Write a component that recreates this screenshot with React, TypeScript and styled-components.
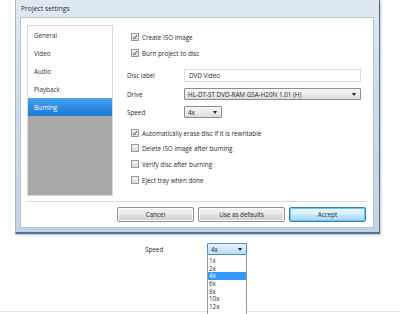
import styled, { createGlobalStyle } from "styled-components";

const GlobalStyle = createGlobalStyle`
  html, body {
    margin: 0;
    padding: 0;
    background: #ffffff;
  }
  body {
    width: 400px;
    height: 314px;
    overflow: hidden;
    font-family: "Open Sans", "DejaVu Sans", sans-serif;
    font-size: 6.3px;
    color: #2a2a2a;
  }
`;

const Page = styled.div`
  display: flex;
  flex-direction: column;
  width: 400px;
  height: 314px;
`;

const Window = styled.div`
  margin-left: 15px;
  width: 365px;
  height: 234px;
  box-sizing: border-box;
  display: flex;
  flex-direction: column;
  background: linear-gradient(180deg, #dfe9f3 0%, #cfdcea 40%, #c3d3e4 100%);
  border-right: 1px solid #4e6e8a;
  border-bottom: 2px solid #4f7390;
  border-left: 1px solid #a9bccf;
  box-shadow: 1px 1px 2px rgba(60, 80, 100, 0.35);
`;

const TitleBar = styled.div`
  height: 17px;
  display: flex;
  align-items: center;
  padding-left: 5px;
  font-size: 6.8px;
  color: #1e1e1e;
  text-shadow: 0 0 3px #ffffff;
`;

const Client = styled.div`
  flex: 1;
  margin: 0 5px 4px 4px;
  background: #ffffff;
  border: 1px solid #b5c4d3;
  padding: 7px 5px 0 6px;
  box-sizing: border-box;
  display: flex;
  flex-direction: column;
`;

const MainRow = styled.div`
  display: flex;
  height: 171px;
`;

const Nav = styled.ul`
  list-style: none;
  margin: 0;
  padding: 0;
  width: 86px;
  display: flex;
  flex-direction: column;
  background: #a9a9a9;
  border: 1px solid #d8d8d8;
  box-sizing: border-box;
`;

const NavItem = styled.li<{ $active?: boolean }>`
  height: 18px;
  display: flex;
  align-items: center;
  padding-left: 6px;
  color: ${(p) => (p.$active ? "#ffffff" : "#333333")};
  background: ${(p) =>
    p.$active
      ? "linear-gradient(180deg, #4aa6f0 0%, #2f8be0 50%, #1f7ad4 100%)"
      : "#ffffff"};
`;

const Content = styled.div`
  flex: 1;
  margin-left: 14px;
  display: flex;
  flex-direction: column;
`;

const CheckRow = styled.label<{ $top: number }>`
  display: flex;
  align-items: center;
  height: 10px;
  margin-top: ${(p) => p.$top}px;
  padding-left: 4px;
  gap: 3px;
`;

const Box = styled.span`
  width: 6px;
  height: 6px;
  border: 1px solid #9a9a9a;
  background: linear-gradient(180deg, #f3f3f3, #dcdcdc);
  display: flex;
  align-items: center;
  justify-content: center;
  flex-shrink: 0;
`;

const FieldRow = styled.div<{ $top: number }>`
  display: flex;
  align-items: center;
  margin-top: ${(p) => p.$top}px;
`;

const FieldLabel = styled.span`
  width: 57px;
  flex-shrink: 0;
`;

const TextField = styled.div`
  width: 177px;
  height: 13px;
  box-sizing: border-box;
  border: 1px solid #d6dce4;
  display: flex;
  align-items: center;
  padding-left: 4px;
`;

const Select = styled.div<{ $w: number; $focus?: boolean }>`
  width: ${(p) => p.$w}px;
  height: 12px;
  box-sizing: border-box;
  border: 1px solid ${(p) => (p.$focus ? "#4f8fc0" : "#8c8c8c")};
  border-radius: 1px;
  background: ${(p) =>
    p.$focus
      ? "linear-gradient(180deg, #eaf5fd 0%, #cfe7f8 50%, #b9dcf4 100%)"
      : "linear-gradient(180deg, #f7f7f7 0%, #ebebeb 50%, #dcdcdc 100%)"};
  display: flex;
  align-items: center;
  justify-content: space-between;
  padding: 0 4px 0 3px;
`;

const Arrow = styled.span`
  width: 0;
  height: 0;
  border-left: 2px solid transparent;
  border-right: 2px solid transparent;
  border-top: 3px solid #222;
`;

const Separator = styled.div`
  margin-top: 5px;
  height: 1px;
  width: 341px;
  background: #d9d9d9;
`;

const ButtonRow = styled.div`
  display: flex;
  justify-content: flex-end;
  gap: 4px;
  margin-top: 5px;
  padding-right: 2px;
`;

const Button = styled.div<{ $w: number; $primary?: boolean }>`
  width: ${(p) => p.$w}px;
  height: 15px;
  box-sizing: border-box;
  border: 1px solid ${(p) => (p.$primary ? "#3c7fb1" : "#8e8f8f")};
  border-radius: 2px;
  display: flex;
  align-items: center;
  justify-content: center;
  background: ${(p) =>
    p.$primary
      ? "linear-gradient(180deg, #eaf6fd 0%, #d9f0fc 45%, #bee6fd 55%, #a7d9f5 100%)"
      : "linear-gradient(180deg, #f2f2f2 0%, #ebebeb 45%, #dddddd 55%, #cfcfcf 100%)"};
  box-shadow: ${(p) => (p.$primary ? "inset 0 0 0 1px #6cc4f0" : "inset 0 0 0 1px #fbfbfb")};
`;

const Demo = styled.div`
  display: flex;
  align-items: flex-start;
  padding: 9px 0 0 145px;
  height: 77px;
  box-sizing: border-box;
`;

const DemoLabel = styled.span`
  width: 62px;
  margin-top: 2px;
`;

const DropWrap = styled.div`
  display: flex;
  flex-direction: column;
  position: relative;
  z-index: 2;
`;

const List = styled.ul`
  list-style: none;
  margin: 0;
  padding: 2px 0 0;
  width: 40px;
  height: 62px;
  box-sizing: border-box;
  background: #ffffff;
  border-left: 1px solid #9a9a9a;
  border-right: 1px solid #9a9a9a;
  font-size: 6.3px;
`;

const ListItem = styled.li<{ $active?: boolean }>`
  height: 7.7px;
  line-height: 7.7px;
  padding-left: 1px;
  color: ${(p) => (p.$active ? "#ffffff" : "#333")};
  background: ${(p) => (p.$active ? "#3399ff" : "transparent")};
`;

const BottomLine = styled.div`
  height: 1px;
  background: #e2e2e2;
`;

const Check = () => (
  <svg width="6" height="6" viewBox="0 0 6 6">
    <path d="M1 3.2 L2.4 4.8 L5 1" fill="none" stroke="#2a4f7a" strokeWidth="1" />
  </svg>
);

const CheckItem = ({ top, checked, label }: { top: number; checked?: boolean; label: string }) => (
  <CheckRow $top={top}>
    <Box>{checked && <Check />}</Box>
    {label}
  </CheckRow>
);

const navItems = ["General", "Video", "Audio", "Playback", "Burning"];
const speeds = ["1x", "2x", "4x", "6x", "8x", "10x", "12x"];

const App = () => {
  return (
    <Page>
      <GlobalStyle />
      <Window>
        <TitleBar>Project settings</TitleBar>
        <Client>
          <MainRow>
            <Nav>
              {navItems.map((n) => (
                <NavItem key={n} $active={n === "Burning"}>
                  {n}
                </NavItem>
              ))}
            </Nav>
            <Content>
              <CheckItem top={7} checked label="Create ISO image" />
              <CheckItem top={6} checked label="Burn project to disc" />
              <FieldRow $top={11}>
                <FieldLabel>Disc label</FieldLabel>
                <TextField>DVD Video</TextField>
              </FieldRow>
              <FieldRow $top={6}>
                <FieldLabel>Drive</FieldLabel>
                <Select $w={177}>
                  HL-DT-ST DVD-RAM GSA-H20N 1.01 (H)
                  <Arrow />
                </Select>
              </FieldRow>
              <FieldRow $top={6}>
                <FieldLabel>Speed</FieldLabel>
                <Select $w={38}>
                  4x
                  <Arrow />
                </Select>
              </FieldRow>
              <CheckItem top={10} checked label="Automatically erase disc if it is rewritable" />
              <CheckItem top={5} label="Delete ISO image after burning" />
              <CheckItem top={6} label="Verify disc after burning" />
              <CheckItem top={6} label="Eject tray when done" />
            </Content>
          </MainRow>
          <Separator />
          <ButtonRow>
            <Button $w={77}>Cancel</Button>
            <Button $w={87}>Use as defaults</Button>
            <Button $w={77} $primary>
              Accept
            </Button>
          </ButtonRow>
        </Client>
      </Window>
      <Demo>
        <DemoLabel>Speed</DemoLabel>
        <DropWrap>
          <Select $w={40} $focus>
            4x
            <Arrow />
          </Select>
          <List>
            {speeds.map((s) => (
              <ListItem key={s} $active={s === "4x"}>
                {s}
              </ListItem>
            ))}
          </List>
        </DropWrap>
      </Demo>
      <BottomLine />
    </Page>
  );
};

export default App;
